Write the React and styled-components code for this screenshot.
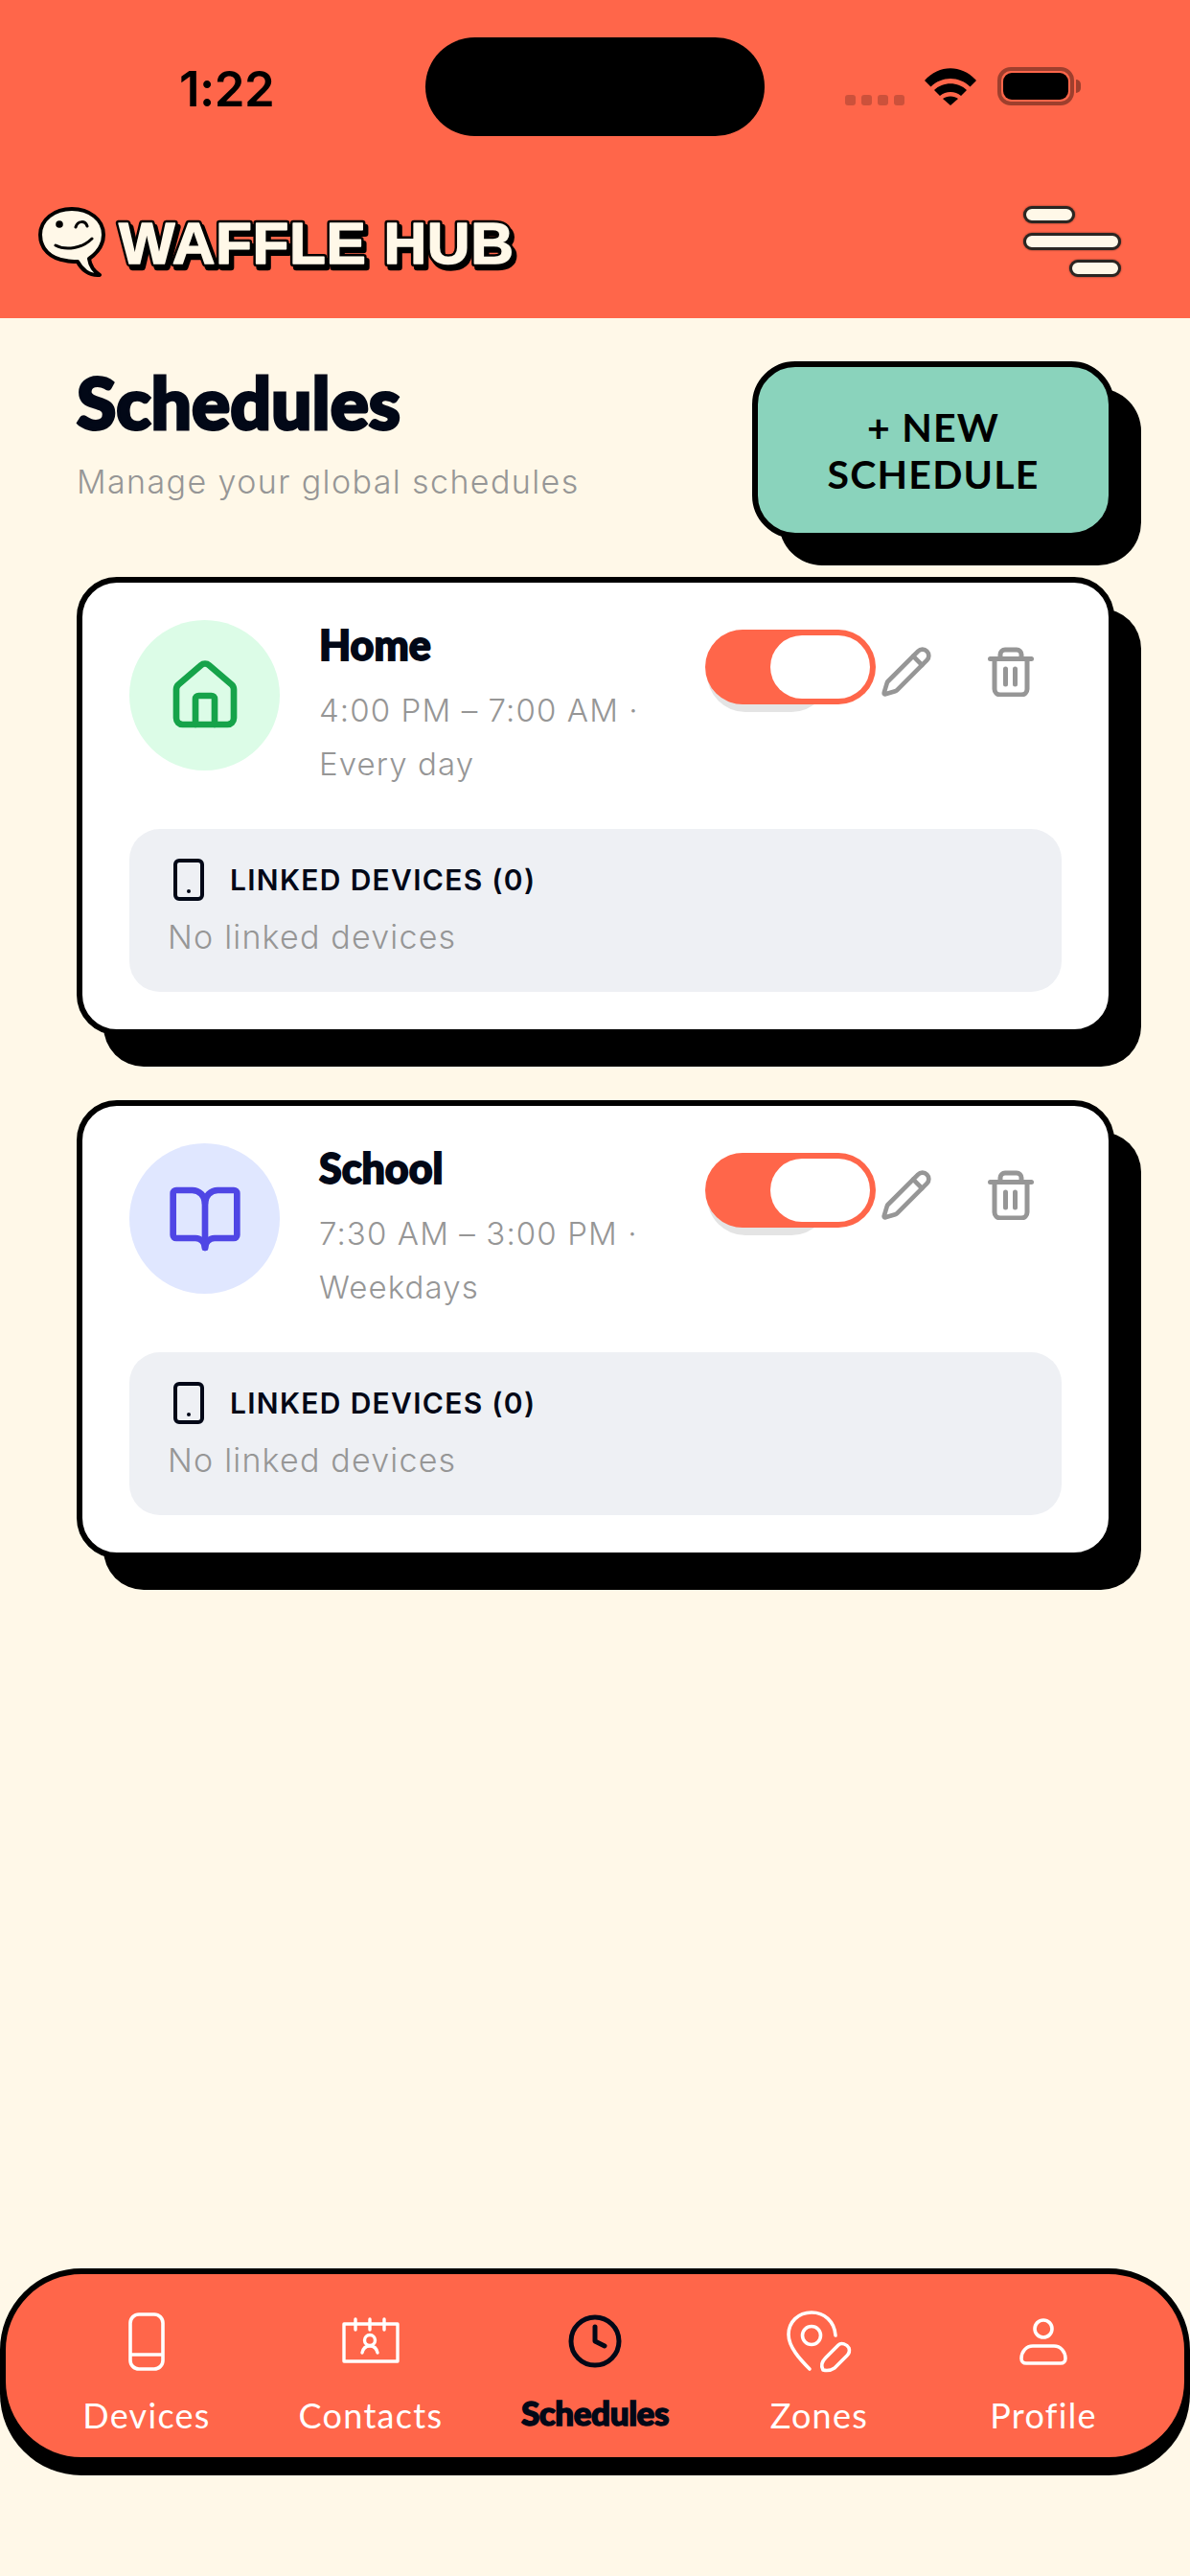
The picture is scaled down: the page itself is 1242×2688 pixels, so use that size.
import React from "react";
import styled, { createGlobalStyle } from "styled-components";
import { House, BookOpen, Pencil, Smartphone, Clock } from "lucide-react";

const orange = "#FF664A";
const cream = "#FFF8E8";
const ink = "#020817";
const grey = "#969696";

const GlobalStyle = createGlobalStyle`
  html, body { margin: 0; padding: 0; background: ${cream}; }
  * { box-sizing: border-box; }
`;

// ********************** STYLED COMPONENTS ***************************************
const Page = styled.div`
  width: 1242px;
  height: 2688px;
  display: flex;
  flex-direction: column;
  background: ${cream};
  font-family: "Inter", "Liberation Sans", sans-serif;
  overflow: hidden;
`;

const Header = styled.header`
  height: 332px;
  flex: none;
  background: ${orange};
  padding-top: 39px;
`;

const StatusBar = styled.div`
  display: grid;
  grid-template-columns: 444px 354px 1fr;
  height: 103px;
`;

const Time = styled.div`
  font-family: "Inter", "Liberation Sans", sans-serif;
  font-weight: 600;
  font-size: 51px;
  line-height: 50px;
  letter-spacing: -0.5px;
  color: #000;
  padding: 29px 0 0 187px;
`;

const Island = styled.div`
  background: #000;
  border-radius: 52px;
`;

const StatusIcons = styled.div`
  display: flex;
  align-items: flex-end;
  padding: 0 0 32px 84px;
`;

const Dots = styled.div`
  display: flex;
  gap: 6px;
  margin-right: 21px;
`;

const Dot = styled.span`
  width: 11px;
  height: 11px;
  border-radius: 3px;
  background: rgba(0, 0, 0, 0.2);
`;

const Battery = styled.div`
  width: 80px;
  height: 40px;
  margin-left: 22px;
  padding: 2px;
  border: 4px solid rgba(0, 0, 0, 0.38);
  border-radius: 14px;
  position: relative;
  &::after {
    content: "";
    position: absolute;
    right: -11px;
    top: 9px;
    width: 5px;
    height: 14px;
    border-radius: 0 5px 5px 0;
    background: rgba(0, 0, 0, 0.38);
  }
`;

const BatteryFill = styled.div`
  width: 100%;
  height: 100%;
  border-radius: 9px;
  background: #000;
`;

const AppBar = styled.div`
  display: flex;
  justify-content: space-between;
  align-items: flex-start;
  padding: 72px 72px 0 39px;
`;

const Logo = styled.div`
  display: flex;
  align-items: flex-start;
  gap: 3px;
`;

const LogoType = styled.svg`
  font-family: "Liberation Sans", Arial, sans-serif;
  font-weight: 700;
  font-size: 62px;
  margin-top: 6px;
`;

const MenuButton = styled.div`
  width: 102px;
  display: flex;
  flex-direction: column;
  gap: 10px;
  margin-top: 1px;
`;

const MenuBar = styled.span`
  display: block;
  height: 18px;
  width: ${(p) => p.$width}px;
  align-self: ${(p) => (p.$end ? "flex-end" : "flex-start")};
  background: ${cream};
  border: 3px solid #2a2622;
  border-radius: 9px;
  box-shadow: 0 0 2px rgba(0, 0, 0, 0.6);
`;

const Content = styled.main`
  padding: 45px 79px 0 80px;
  display: flex;
  flex-direction: column;
  gap: 68px;
  flex: 1;
`;

const TitleRow = styled.div`
  display: flex;
  justify-content: space-between;
  margin-bottom: -28px;
`;

const Heading = styled.div`
  padding-top: 3px;
`;

const Title = styled.h1`
  margin: 0;
  font-family: "Lato", "Liberation Sans", sans-serif;
  font-weight: 900;
  font-size: 75px;
  line-height: 78px;
  color: ${ink};
  -webkit-text-stroke: 3px ${ink};
`;

const Subtitle = styled.p`
  margin: 23px 0 0;
  font-size: 34px;
  line-height: 44px;
  font-weight: 300;
  letter-spacing: 1.4px;
  color: ${grey};
`;

const NewButton = styled.button`
  width: 378px;
  height: 185px;
  flex: none;
  padding: 0 60px;
  background: #8AD3BC;
  border: 6px solid #000;
  border-radius: 45px;
  box-shadow: 28px 28px 0 #000;
  font-family: "Lato", "Liberation Sans", sans-serif;
  font-weight: 700;
  font-size: 41px;
  line-height: 49px;
  letter-spacing: 1.2px;
  color: #000;
  text-align: center;
`;

const Card = styled.section`
  height: 478px;
  background: #fff;
  border: 6px solid #000;
  border-radius: 42px;
  box-shadow: 28px 33px 0 #000;
  padding: 39px 49px 0;
`;

const CardTop = styled.div`
  display: flex;
  align-items: flex-start;
  height: 156px;
  margin-bottom: 62px;
`;

const IconCircle = styled.div`
  width: 157px;
  height: 157px;
  flex: none;
  border-radius: 50%;
  display: flex;
  align-items: center;
  justify-content: center;
  background: ${(p) => p.$bg};
  color: ${(p) => p.$fg};
`;

const CardText = styled.div`
  width: 403px;
  flex: none;
  margin-left: 41px;
  padding: 3px 0 0 0;
`;

const CardName = styled.h2`
  margin: 0 0 17px;
  font-family: "Lato", "Liberation Sans", sans-serif;
  font-weight: 900;
  font-size: 43px;
  line-height: 46px;
  color: ${ink};
  -webkit-text-stroke: 1.8px ${ink};
`;

const When = styled.div`
  font-size: 33px;
  line-height: 56px;
  font-weight: 300;
  letter-spacing: 1.1px;
  color: ${grey};
  white-space: pre-line;
`;

const ToggleWrap = styled.div`
  position: relative;
  width: 178px;
  height: 78px;
  flex: none;
  margin-top: 10px;
  &::before {
    content: "";
    position: absolute;
    left: 2px;
    top: 6px;
    width: 128px;
    height: 80px;
    border-radius: 40px;
    background: #e4e4e4;
  }
`;

const Toggle = styled.div`
  position: relative;
  height: 78px;
  padding: 6px;
  display: flex;
  justify-content: flex-end;
  background: ${orange};
  border-radius: 39px;
`;

const Thumb = styled.span`
  width: 104px;
  height: 66px;
  background: #fff;
  border-radius: 33px;
`;

const EditIcon = styled(Pencil)`
  flex: none;
  margin: 26px 0 0 4px;
  color: ${grey};
`;

const TrashIcon = styled.svg`
  flex: none;
  margin: 28px 0 0 57px;
`;

const LinkedPanel = styled.div`
  height: 170px;
  background: #EEF0F4;
  border-radius: 32px;
  padding: 29px 40px 0;
`;

const LinkedHead = styled.div`
  display: flex;
  align-items: center;
  gap: 19px;
  margin-left: -2px;
`;

const LinkedTitle = styled.span`
  font-size: 30px;
  line-height: 48px;
  font-weight: 600;
  letter-spacing: 1.3px;
  color: ${ink};
`;

const LinkedEmpty = styled.div`
  margin-top: 11px;
  font-size: 34px;
  line-height: 50px;
  font-weight: 300;
  letter-spacing: 1.2px;
  color: ${grey};
`;

const Nav = styled.nav`
  flex: none;
  height: 203px;
  margin-bottom: 118px;
  padding: 35px 30px 0;
  display: grid;
  grid-template-columns: repeat(5, 1fr);
  background: ${orange};
  border: 6px solid #000;
  border-radius: 85px;
  box-shadow: 0 13px 0 #000;
`;

const NavItem = styled.div`
  display: flex;
  flex-direction: column;
  align-items: center;
  gap: 20px;
`;

const NavIcon = styled.div`
  height: 70px;
  display: flex;
  align-items: center;
  justify-content: center;
`;

const NavLabel = styled.span`
  font-family: "Lato", "Liberation Sans", sans-serif;
  font-size: ${(p) => (p.$active ? 35 : 36)}px;
  line-height: 44px;
  font-weight: ${(p) => (p.$active ? 900 : 400)};
  color: ${(p) => (p.$active ? ink : "#fff")};
  -webkit-text-stroke: ${(p) => (p.$active ? `1.5px ${ink}` : "0")};
  letter-spacing: ${(p) => (p.$active ? "-0.4px" : "1.3px")};
  margin-top: ${(p) => (p.$active ? "-3px" : "0")};
`;
// ********************** STYLED COMPONENTS END ***********************************

const schedules = [
  { id: 1, name: "Home", when: "4:00 PM – 7:00 AM ·\nEvery day", Icon: House, bg: "#DCFCE7", fg: "#16A34A" },
  { id: 2, name: "School", when: "7:30 AM – 3:00 PM ·\nWeekdays", Icon: BookOpen, bg: "#E0E7FF", fg: "#4F46E5" },
];

const Wifi = () => (
  <svg width="54" height="39" viewBox="0 0 54 39" fill="#000">
    <path d="M0 13C15-4 39-4 54 13L47.5 19.5C36 8 18 8 6.5 19.5Z" />
    <path d="M10 23C19 14 35 14 44 23L38 29C32 23.5 22 23.5 16 29Z" />
    <path d="M19 32C23 28.5 31 28.5 35 32L27 39Z" />
  </svg>
);

const Bubble = () => (
  <svg width="76" height="78" viewBox="0 0 76 78">
    <path
      d="M36 4C54 4 69 15 69 31C69 43 61 51 54 56C55 63 59 69 65 73C54 74 46 67 42 59C38 59 34 59 30 58C14 56 3 46 3 31C3 15 18 4 36 4Z"
      fill={cream}
      stroke="#000"
      strokeWidth="4"
      strokeLinejoin="round"
    />
    <circle cx="23" cy="20" r="3.8" fill="#000" />
    <path d="M40 23C42 16 50 16 52 22M19 42C30 48 47 45 57 35" fill="none" stroke="#000" strokeWidth="3" strokeLinecap="round" />
  </svg>
);

const Trash = ({ className }) => (
  <svg className={className} width="48" height="52" viewBox="0 0 48 52" fill="none" stroke={grey} strokeWidth="5" strokeLinecap="round" strokeLinejoin="round">
    <path d="M2.5 12.5H45.5" />
    <path d="M13 12V8a5 5 0 0 1 5-5h12a5 5 0 0 1 5 5v4" />
    <path d="M7 13v31a6 6 0 0 0 6 6h22a6 6 0 0 0 6-6V13" />
    <path d="M18.5 23v16M28.5 23v16" />
  </svg>
);

const DeviceGlyph = () => (
  <svg width="38" height="61" viewBox="0 0 38 61" fill="none" stroke="#fff" strokeWidth="3.6">
    <rect x="2" y="2" width="34" height="57" rx="9" />
    <path d="M2 44H36" />
  </svg>
);

const ContactsGlyph = () => (
  <svg width="60" height="50" viewBox="0 0 60 50" fill="none" stroke="#fff" strokeWidth="3.4" strokeLinecap="round">
    <rect x="2" y="7" width="56" height="39" strokeLinejoin="round" />
    <path d="M14 2V13M29 2V13M44 2V13" />
    <circle cx="29" cy="24" r="5.5" />
    <path d="M21 37C22 32 25 30 29 30S36 32 37 37" />
  </svg>
);

const ZonesGlyph = () => (
  <svg width="74" height="74" viewBox="0 0 74 74" fill="none" stroke="#fff" strokeWidth="3.6" strokeLinecap="round" strokeLinejoin="round">
    <path d="M54 31C53 16 42 7 29 7C15 7 5 17 5 30C5 43 17 56 27 66" />
    <circle cx="29" cy="31" r="9.5" />
    <path d="M41 67C38 62 41 57 44 54L57 41C60 38 66 40 68 44C69 47 68 50 66 52L53 65C50 67 45 68 41 67Z" />
  </svg>
);

const ProfileGlyph = () => (
  <svg width="50" height="50" viewBox="0 0 50 50" fill="none" stroke="#fff" strokeWidth="3.6" strokeLinejoin="round">
    <circle cx="25" cy="12" r="9" />
    <path d="M14 30H36C43 30 48 36 48 43C48 46 46 48 43 48H7C4 48 2 46 2 43C2 36 7 30 14 30Z" />
  </svg>
);

const navItems = [
  { label: "Devices", glyph: <DeviceGlyph /> },
  { label: "Contacts", glyph: <ContactsGlyph /> },
  { label: "Schedules", glyph: <Clock size={60} strokeWidth={2} color={ink} />, active: true },
  { label: "Zones", glyph: <ZonesGlyph /> },
  { label: "Profile", glyph: <ProfileGlyph /> },
];

const App = () => {
  return (
    <Page>
      <GlobalStyle />
      <Header>
        <StatusBar>
          <Time>1:22</Time>
          <Island />
          <StatusIcons>
            <Dots>
              <Dot />
              <Dot />
              <Dot />
              <Dot />
            </Dots>
            <Wifi />
            <Battery>
              <BatteryFill />
            </Battery>
          </StatusIcons>
        </StatusBar>
        <AppBar>
          <Logo>
            <Bubble />
            <LogoType width="430" height="72" viewBox="0 0 430 72">
              <defs>
                <text id="logo-word" x="6" y="55" textLength="412" lengthAdjust="spacing">
                  WAFFLE HUB
                </text>
              </defs>
              <use href="#logo-word" x="3" y="4" fill="#000" stroke="#000" strokeWidth="6.5" strokeLinejoin="round" />
              <use href="#logo-word" fill="#000" stroke="#000" strokeWidth="6.5" strokeLinejoin="round" />
              <use href="#logo-word" fill={cream} stroke={cream} strokeWidth="1.5" strokeLinejoin="round" />
            </LogoType>
          </Logo>
          <MenuButton>
            <MenuBar $width={54} />
            <MenuBar $width={102} />
            <MenuBar $width={54} $end />
          </MenuButton>
        </AppBar>
      </Header>

      <Content>
        <TitleRow>
          <Heading>
            <Title>Schedules</Title>
            <Subtitle>Manage your global schedules</Subtitle>
          </Heading>
          <NewButton>+ NEW SCHEDULE</NewButton>
        </TitleRow>

        {schedules.map(({ id, name, when, Icon, bg, fg }) => (
          <Card key={id}>
            <CardTop>
              <IconCircle $bg={bg} $fg={fg}>
                <Icon size={80} strokeWidth={2} />
              </IconCircle>
              <CardText>
                <CardName>{name}</CardName>
                <When>{when}</When>
              </CardText>
              <ToggleWrap>
                <Toggle>
                  <Thumb />
                </Toggle>
              </ToggleWrap>
              <EditIcon size={56} strokeWidth={2} />
              <TrashIcon as={Trash} />
            </CardTop>
            <LinkedPanel>
              <LinkedHead>
                <Smartphone size={48} strokeWidth={2} color={ink} />
                <LinkedTitle>LINKED DEVICES (0)</LinkedTitle>
              </LinkedHead>
              <LinkedEmpty>No linked devices</LinkedEmpty>
            </LinkedPanel>
          </Card>
        ))}
      </Content>

      <Nav>
        {navItems.map((item) => (
          <NavItem key={item.label}>
            <NavIcon>{item.glyph}</NavIcon>
            <NavLabel $active={item.active}>{item.label}</NavLabel>
          </NavItem>
        ))}
      </Nav>
    </Page>
  );
};

export default App;
